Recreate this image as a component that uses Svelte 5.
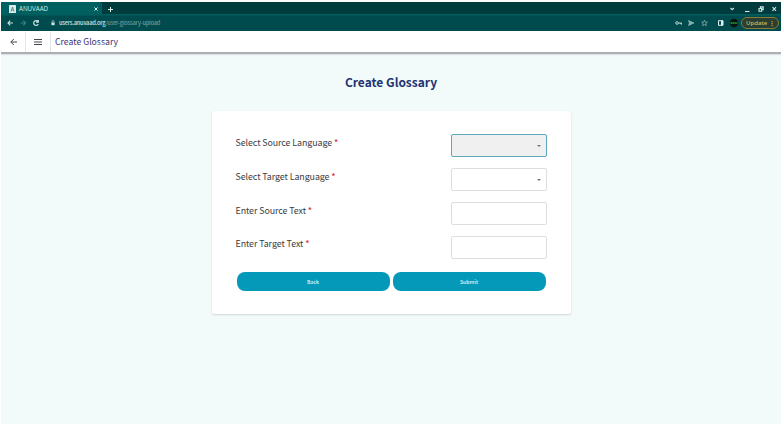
<script>
  const fields = [
    { label: 'Select Source Language', select: true, active: true },
    { label: 'Select Target Language', select: true },
    { label: 'Enter Source Text' },
    { label: 'Enter Target Text' }
  ];
</script>

<div class="window">
  <div class="tabs">
    <div class="tab">
      <svg class="fav" width="7" height="8" viewBox="0 0 7 8"><rect width="7" height="8" rx=".5" fill="#dcebea" /><path d="M2 6.500 3.500 2 5 6.500M2.500 5h2" fill="none" stroke="#487b7b" stroke-width=".8" /></svg>
      <span>ANUVAAD</span>
      <svg class="close" width="4" height="4" viewBox="0 0 4 4"><path d="m.4.4 3.200 3.200m0-3.200L.4 3.600" stroke="#d9efec" stroke-width="1" /></svg>
    </div>
    <svg class="plus" width="5" height="5" viewBox="0 0 5 5"><path d="M2.500 0v5M0 2.500h5" stroke="#d9efec" stroke-width="1" /></svg>
    <svg class="controls" width="50" height="10" viewBox="0 0 50 10" fill="none" stroke="#d5e6e5" stroke-width="1.100">
      <path d="m1.500 4 1.700 1.700L4.900 4" /><path d="M16 7.500h4.500" /><path d="M30 4.500h2.600v2.700H30z" /><path d="M31.500 4.300V2.900h2.600v2.800h-1.300" stroke-width="1.300" /><path d="m43.500 3.200 3.500 3.600m0-3.600-3.500 3.600" />
    </svg>
  </div>
  <div class="toolbar">
    <svg class="nav" width="48" height="10" viewBox="0 0 48 10" fill="none" stroke="#c9e3e0" stroke-width="1.100">
      <path d="M6 5H1m2.200-2.300L1 5l2.200 2.300" /><path d="M13.500 5h5m-2.200-2.300L18.500 5l-2.200 2.300" stroke="#378581" /><path d="M31 3.600A2.400 2.400 0 1 0 31.300 6M31.300 2v2.200h-2.200" stroke-width="1.200" />
      <path d="M45 4.600V3.500a1 1 0 0 1 2 0v1.100" stroke-width=".6" /><path d="M44.400 4.400h3.200v2.800h-3.200z" fill="#c9e3e0" stroke="none" />
    </svg>
    <p class="url">users.anuvaad.org<span>/user-glossary-upload</span></p>
    <svg class="tools" width="66" height="12" viewBox="0 0 66 12" fill="none" stroke="#b8d0ce" stroke-width="1">
      <circle cx="3" cy="6" r="1.300" /><path d="M4.300 6h3.200v1.600M6.200 6v1.200" />
      <path d="m14.500 3.500 5.500 2.500-5.500 2.500.9-2.500z" fill="#86aaa8" stroke-width=".5" />
      <path d="m30.500 3.200.8 1.900 2 .2-1.500 1.300.5 2-1.800-1.100-1.800 1.100.5-2-1.500-1.300 2-.2z" stroke-width=".8" stroke="#8fb3b0" />
      <path d="M44.500 3.700H49v4.600h-4.500z" stroke="#e1efee" /><path d="M47 3.700h2v4.600h-2z" fill="#e1efee" stroke="none" />
      <circle cx="60" cy="6" r="4.200" fill="#06140b" stroke="none" /><path d="M56.500 6h7" stroke="#168231" stroke-width="1.800" stroke-dasharray="1.600 .3" />
    </svg>
    <div class="update"><span>Update</span><i>⋮</i></div>
  </div>
  <header>
    <svg class="back" width="7" height="8" viewBox="0 0 7 8" fill="none" stroke="#484550" stroke-width="1"><path d="M7 4H.8m3-3-3 3 3 3" /></svg>
    <div class="menu"><svg width="8" height="8" viewBox="0 0 8 8" stroke="#484550" stroke-width="1"><path d="M0 1.500h8M0 4h8M0 6.500h8" /></svg></div>
    <span class="name">Create Glossary</span>
  </header>
  <main>
    <h1>Create Glossary</h1>
    <form class="card">
      {#each fields as f}
        <div class="row">
          <span class="label">{f.label} <b>*</b></span>
          <div class="field" class:active={f.active}>
            {#if f.select}<svg width="4" height="2" viewBox="0 0 4 2"><path d="M0 0h4L2 2z" fill="#777" /></svg>{/if}
          </div>
        </div>
      {/each}
      <div class="buttons">
        <button type="button">Back</button>
        <button type="button">Submit</button>
      </div>
    </form>
  </main>
</div>

<style>
  :global(body) { background: #fff; }
  .window { width: 780px; height: 422px; margin: 2px 1px 0; overflow: hidden; display: flex; flex-direction: column; background: #f3f9fa; background: #f3fafa; font-family: "Noto Sans CJK SC", "Noto Sans", sans-serif; }
  svg { flex: none; display: block; }
  .tabs { height: 12px; flex: none; display: flex; align-items: center; background: #003c3e; }
  .tab { width: 101px; height: 12px; display: flex; align-items: center; background: #00605f; border-radius: 0 2px 0 0; color: #d5ebe8; font: 6.2px/12px "Open Sans", sans-serif; }
  .fav { margin: 1px 3px 0 8px; }
  .tab span { padding-top: 1px; }
  .close { margin: 2px 4px 0 auto; }
  .plus { margin: 2px 0 0 6px; }
  .controls { margin: 2px 2px 0 auto; }
  .toolbar { height: 17px; flex: none; display: flex; align-items: center; background: linear-gradient(#005e5d 0 1px, #004b4e 2px); }
  .toolbar > svg { margin-top: 1px; }
  .nav { margin-left: 6px; }
  .url { margin: 1px 0 0 4px; font: 500 5.7px/16px "Noto Sans CJK SC", sans-serif; letter-spacing: -.24px; color: #d3e5e4; white-space: nowrap; }
  .url span { color: #6b9c9b; }
  .toolbar > .tools { margin-left: auto; }
  .update { box-sizing: border-box; width: 38px; height: 12px; margin: 1px 2px 0 1px; padding: 0 3px 0 4px; border: 1px solid #8d7c35; border-radius: 6px; display: flex; justify-content: space-between; background: #293f34; color: #d3b557; font: 600 6px/10px "Open Sans", sans-serif; }
  .update i { font-style: normal; }
  header { box-sizing: border-box; height: 23px; flex: none; display: flex; align-items: center; background: #fff; border-bottom: 2px solid #acb0b2; box-shadow: 0 1px 1px #dde2e3; }
  .back { margin: 1px 0 0 9px; }
  .menu { width: 24px; height: 20px; margin: 0 0 0 8px; border: solid #e6e6e6; border-width: 0 1px; display: flex; align-items: center; justify-content: center; }
  .name { margin-left: 4px; padding-top: 1px; font-size: 8.7px; line-height: 18px; color: #3c3474; }
  main { display: flex; flex-direction: column; align-items: center; }
  h1 { margin: 18px 0 0; height: 20px; font-size: 12px; line-height: 20px; font-weight: 700; color: #233472; }
  .card { box-sizing: border-box; width: 359px; height: 203px; margin-top: 19px; padding: 23px 23.5px 0 24px; display: flex; flex-direction: column; background: #fff; border-radius: 2px; box-shadow: 0 1px 2px #cdd5d7; }
  .row { height: 33.8px; flex: none; display: flex; justify-content: space-between; align-items: flex-start; }
  .label { font-size: 8.85px; line-height: 17px; letter-spacing: -.07px; color: #3c3c3c; white-space: nowrap; }
  .label b { font-weight: 500; color: #d8343c; }
  .field { box-sizing: border-box; width: 96.5px; height: 23px; margin-top: .3px; padding-right: 5px; border: 1px solid #dedede; border-radius: 2px; display: flex; align-items: center; justify-content: flex-end; }
  .active { background: #f0f0f0; border-color: #59a9bb; }
  .buttons { display: flex; gap: 3px; margin: 3px 1px 0; }
  button { width: 153px; height: 19px; flex: none; padding: 0; border: 0; border-radius: 8px; background: #0499b8; color: #e3f6fa; font: 500 5.200px/19px "Noto Sans CJK SC", sans-serif; }
</style>
